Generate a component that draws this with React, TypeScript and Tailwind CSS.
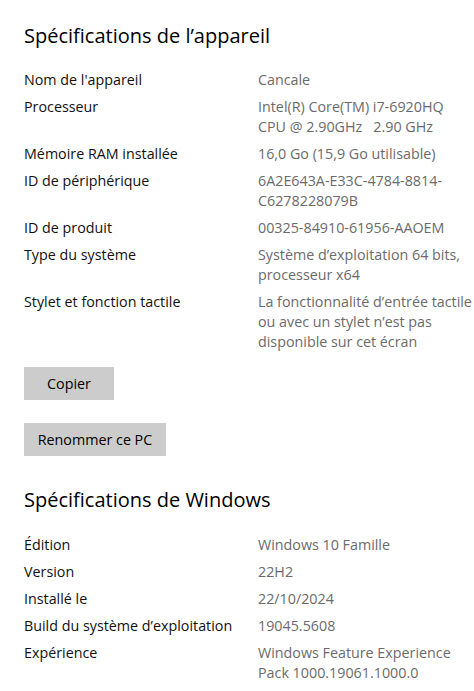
const font = { fontFamily: '"Segoe UI", "Open Sans", "Liberation Sans", sans-serif' };

type Row = { label: string; value: string[] };

const device: Row[] = [
  { label: "Nom de l'appareil", value: ["Cancale"] },
  { label: "Processeur", value: ["Intel(R) Core(TM) i7-6920HQ", "CPU @ 2.90GHz   2.90 GHz"] },
  { label: "Mémoire RAM installée", value: ["16,0 Go (15,9 Go utilisable)"] },
  { label: "ID de périphérique", value: ["6A2E643A-E33C-4784-8814-", "C6278228079B"] },
  { label: "ID de produit", value: ["00325-84910-61956-AAOEM"] },
  { label: "Type du système", value: ["Système d’exploitation 64 bits,", "processeur x64"] },
  {
    label: "Stylet et fonction tactile",
    value: ["La fonctionnalité d’entrée tactile", "ou avec un stylet n’est pas", "disponible sur cet écran"],
  },
];

const windows: Row[] = [
  { label: "Édition", value: ["Windows 10 Famille"] },
  { label: "Version", value: ["22H2"] },
  { label: "Installé le", value: ["22/10/2024"] },
  { label: "Build du système d’exploitation", value: ["19045.5608"] },
  { label: "Expérience", value: ["Windows Feature Experience", "Pack 1000.19061.1000.0"] },
];

function Specs({ rows }: { rows: Row[] }) {
  return (
    <div className="flex flex-col gap-[7px]">
      {rows.map((r) => (
        <div key={r.label} className="flex text-[14.3px] leading-[20px]">
          <div className="w-[234px] shrink-0 text-[#111111]">{r.label}</div>
          <div className="whitespace-pre text-[#6b6b6b]">
            {r.value.map((line) => (
              <div key={line}>{line}</div>
            ))}
          </div>
        </div>
      ))}
    </div>
  );
}

export default function App() {
  return (
    <div className="w-[474px] h-[691px] overflow-hidden bg-white pl-6 pt-[22px]" style={font}>
      <h1 className="text-[20px] leading-[28px] text-black font-normal">Spécifications de l’appareil</h1>
      <div className="mt-5">
        <Specs rows={device} />
      </div>
      <div className="mt-[15px] flex flex-col items-start gap-[23px]">
        <button className="h-[33px] w-[90px] bg-[#cccccc] text-[14.3px] text-black">Copier</button>
        <button className="h-[33px] w-[142px] bg-[#cccccc] text-[14.3px] text-black">Renommer ce PC</button>
      </div>
      <h2 className="mt-[30px] text-[20px] leading-[28px] text-black font-normal">Spécifications de Windows</h2>
      <div className="mt-[21px]">
        <Specs rows={windows} />
      </div>
    </div>
  );
}
